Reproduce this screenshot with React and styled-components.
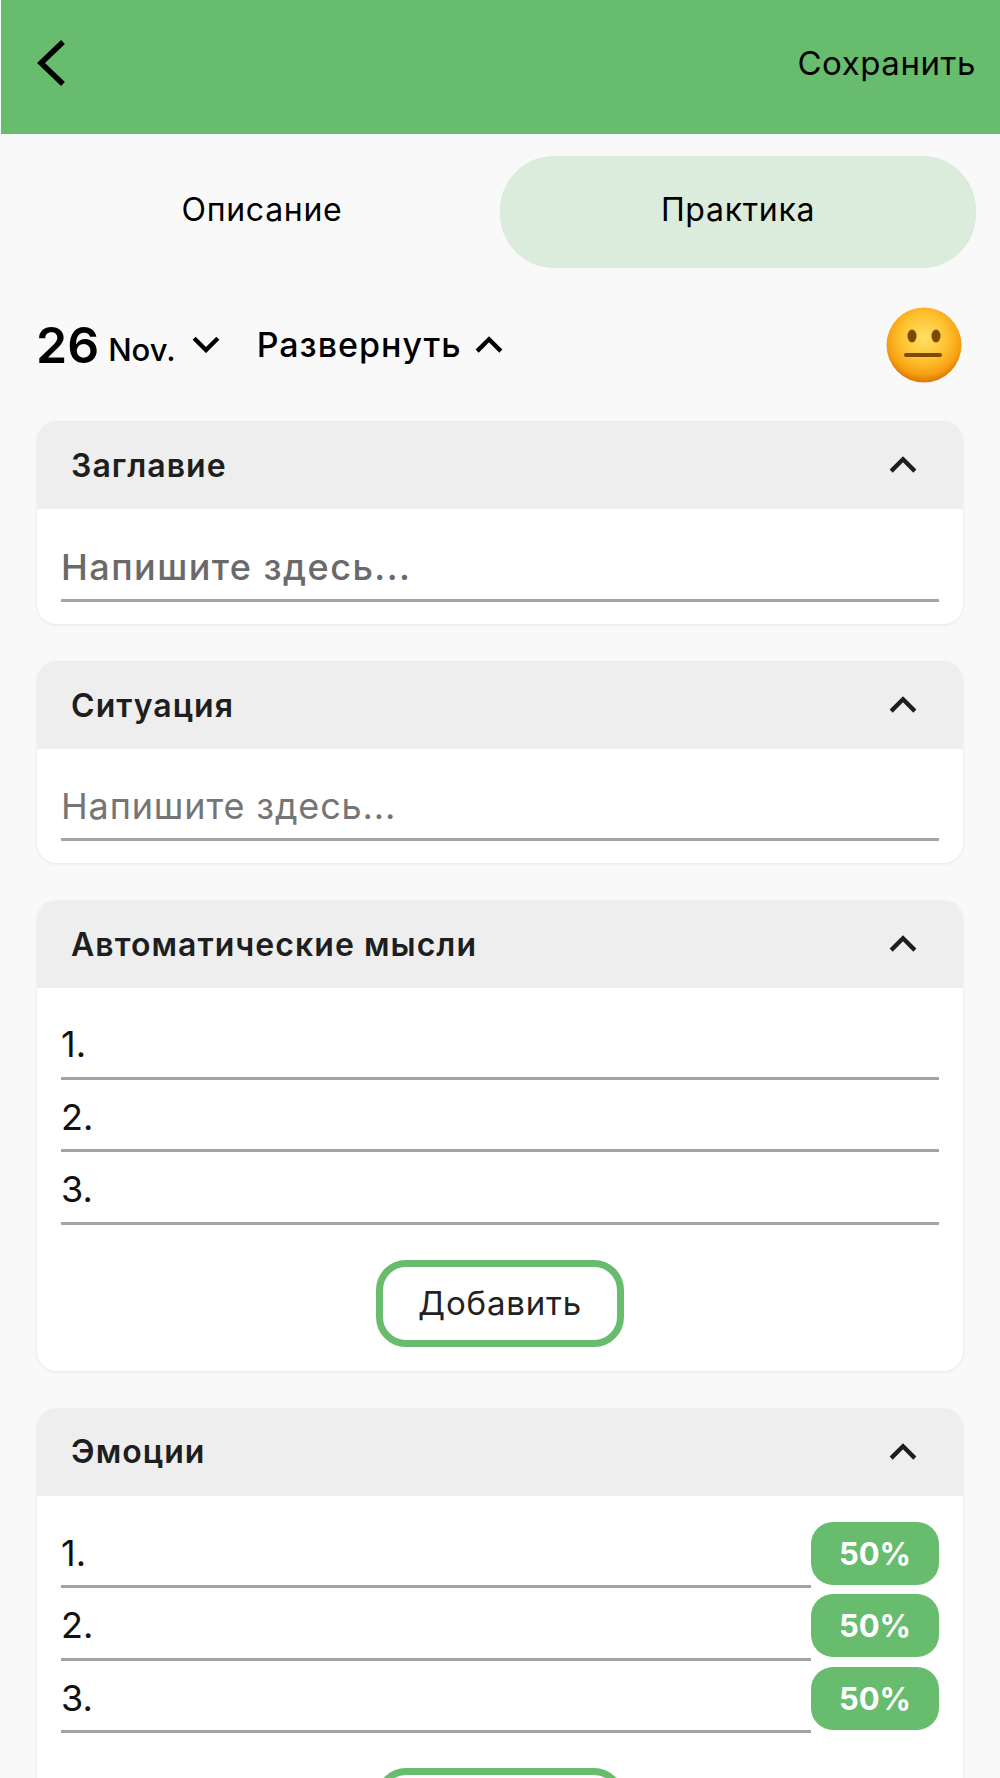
import React from 'react';
import styled, { createGlobalStyle } from 'styled-components';

const Global = createGlobalStyle`
  html, body { margin: 0; padding: 0; background: #fff; }
  * { box-sizing: border-box; }
  body { font-family: Inter, "Noto Sans", sans-serif; }
`;

const Page = styled.div`
  width: 1000px;
  height: 1778px;
  overflow: hidden;
  background: #f9f9f9;
  padding-left: 1px;
`;
const Header = styled.header`
  height: 134px;
  background: #67bc6d;
  display: flex;
  align-items: center;
  justify-content: space-between;
  padding: 0 24px 8px 36px;
`;
const HeaderAction = styled.span`
  font-size: 33px;
  color: #000;
  letter-spacing: 0.55px;
`;
const Tabs = styled.div`
  display: grid;
  grid-template-columns: 476px 476px;
  margin: 22px 24px 0 23px;
`;
const Tab = styled.div`
  height: 112px;
  border-radius: 54px;
  display: flex;
  align-items: center;
  justify-content: center;
  padding-bottom: 6px;
  font-size: 32px;
  color: #000;
  letter-spacing: 0.7px;
  background: ${p => (p.$active ? '#dbebdc' : 'transparent')};
`;
const DateRow = styled.div`
  height: 153px;
  display: flex;
  align-items: center;
  padding: 0 38px 0 35px;
`;
const Day = styled.span`
  font-size: 50px;
  font-weight: 600;
  color: #000;
`;
const Month = styled.span`
  font-size: 31px;
  font-weight: 500;
  color: #000;
  margin-left: 9px;
  margin-top: 9px;
`;
const Expand = styled.span`
  font-size: 34px;
  font-weight: 500;
  color: #000;
  letter-spacing: 1px;
  margin-left: 37px;
`;
const Spacer = styled.div`
  flex: 1;
`;
const Cards = styled.div`
  display: flex;
  flex-direction: column;
  gap: 37px;
  padding: 0 37px 0 36px;
`;
const Card = styled.section`
  background: #fff;
  border-radius: 20px;
  box-shadow: 0 1px 2px 1px #eeeeee;
  overflow: hidden;
`;
const CardHead = styled.div`
  height: 88px;
  background: #eeeeee;
  display: flex;
  align-items: center;
  justify-content: space-between;
  padding: 0 46px 0 34px;
  font-size: 32px;
  font-weight: 600;
  color: #1e1e1e;
  letter-spacing: 1.05px;
`;
const CardBody = styled.div`
  padding: ${p => p.$top}px 24px ${p => p.$bottom}px;
`;
const Row = styled.div`
  display: flex;
  align-items: stretch;
  height: ${p => p.$h || 72.5}px;
`;
const Field = styled.div`
  flex: 1;
  display: flex;
  align-items: center;
  padding-top: 5px;
  border-bottom: 3px solid #a4a4a4;
  font-size: ${p => p.$size || 36}px;
  font-weight: ${p => p.$weight || 400};
  color: ${p => p.$color || '#111'};
  letter-spacing: ${p => p.$track || 0}px;
`;
const Chip = styled.div`
  width: 128px;
  height: 63px;
  margin-top: 6px;
  border-radius: 22px;
  background: #67bc6d;
  color: #fff;
  font-size: 31px;
  font-weight: 700;
  display: flex;
  align-items: center;
  justify-content: center;
`;
const AddWrap = styled.div`
  display: flex;
  justify-content: center;
  margin-top: 35px;
`;
const AddButton = styled.div`
  width: 248px;
  height: 87px;
  border: 7px solid #67bc6d;
  border-radius: 30px;
  background: #fff;
  color: #222;
  font-size: 33px;
  letter-spacing: 0.8px;
  display: flex;
  align-items: center;
  justify-content: center;
`;

const Chevron = ({ up, size = 28, w = 4, ml = 0, color = '#000' }) => (
  <svg width={size} height={size * 0.62} viewBox="0 0 26 16" style={{ marginLeft: ml, display: 'block' }}>
    <path d={up ? 'M2 14 L13 3 L24 14' : 'M2 2 L13 13 L24 2'} fill="none" stroke={color} strokeWidth={w} />
  </svg>
);

const Back = () => (
  <svg width="30" height="46" viewBox="0 0 30 46">
    <path d="M26 2 L4 23 L26 44" fill="none" stroke="#000" strokeWidth="5.5" />
  </svg>
);

const Neutral = () => (
  <svg width="76" height="76" viewBox="0 0 76 76">
    <defs>
      <radialGradient id="f" cx="50%" cy="40%" r="58%">
        <stop offset="0%" stopColor="#ffe066" />
        <stop offset="55%" stopColor="#fdc12e" />
        <stop offset="85%" stopColor="#f7a012" />
        <stop offset="100%" stopColor="#df7c06" />
      </radialGradient>
    </defs>
    <circle cx="38" cy="38" r="37.5" fill="url(#f)" />
    <ellipse cx="26" cy="29" rx="4.5" ry="6.5" fill="#7b4a06" />
    <ellipse cx="50" cy="29" rx="4.5" ry="6.5" fill="#7b4a06" />
    <rect x="18" y="46" width="38" height="4" rx="2" fill="#7b4a06" />
  </svg>
);

const Section = ({ title, top, bottom, children }) => (
  <Card>
    <CardHead>
      {title}
      <Chevron up color="#1e1e1e" />
    </CardHead>
    <CardBody $top={top} $bottom={bottom}>{children}</CardBody>
  </Card>
);

export default function App() {
  return (
    <Page>
      <Global />
      <Header>
        <Back />
        <HeaderAction>Сохранить</HeaderAction>
      </Header>
      <Tabs>
        <Tab>Описание</Tab>
        <Tab $active>Практика</Tab>
      </Tabs>
      <DateRow>
        <Day>26</Day>
        <Month>Nov.</Month>
        <Chevron ml={16} />
        <Expand>Развернуть</Expand>
        <Chevron up ml={13} />
        <Spacer />
        <Neutral />
      </DateRow>
      <Cards>
        <Section title="Заглавие" top={20} bottom={22}>
          <Row $h={73}>
            <Field $size={36} $weight={500} $color="#6a6a6a" $track={1.45}>Напишите здесь...</Field>
          </Row>
        </Section>
        <Section title="Ситуация" top={20} bottom={22}>
          <Row $h={72}>
            <Field $size={36} $color="#757575" $track={0.85}>Напишите здесь...</Field>
          </Row>
        </Section>
        <Section title="Автоматические мысли" top={19} bottom={24}>
          {['1.', '2.', '3.'].map(n => (
            <Row key={n}><Field>{n}</Field></Row>
          ))}
          <AddWrap><AddButton>Добавить</AddButton></AddWrap>
        </Section>
        <Section title="Эмоции" top={20} bottom={24}>
          {['1.', '2.', '3.'].map(n => (
            <Row key={n}>
              <Field>{n}</Field>
              <Chip>50%</Chip>
            </Row>
          ))}
          <AddWrap><AddButton>Добавить</AddButton></AddWrap>
        </Section>
      </Cards>
    </Page>
  );
}
